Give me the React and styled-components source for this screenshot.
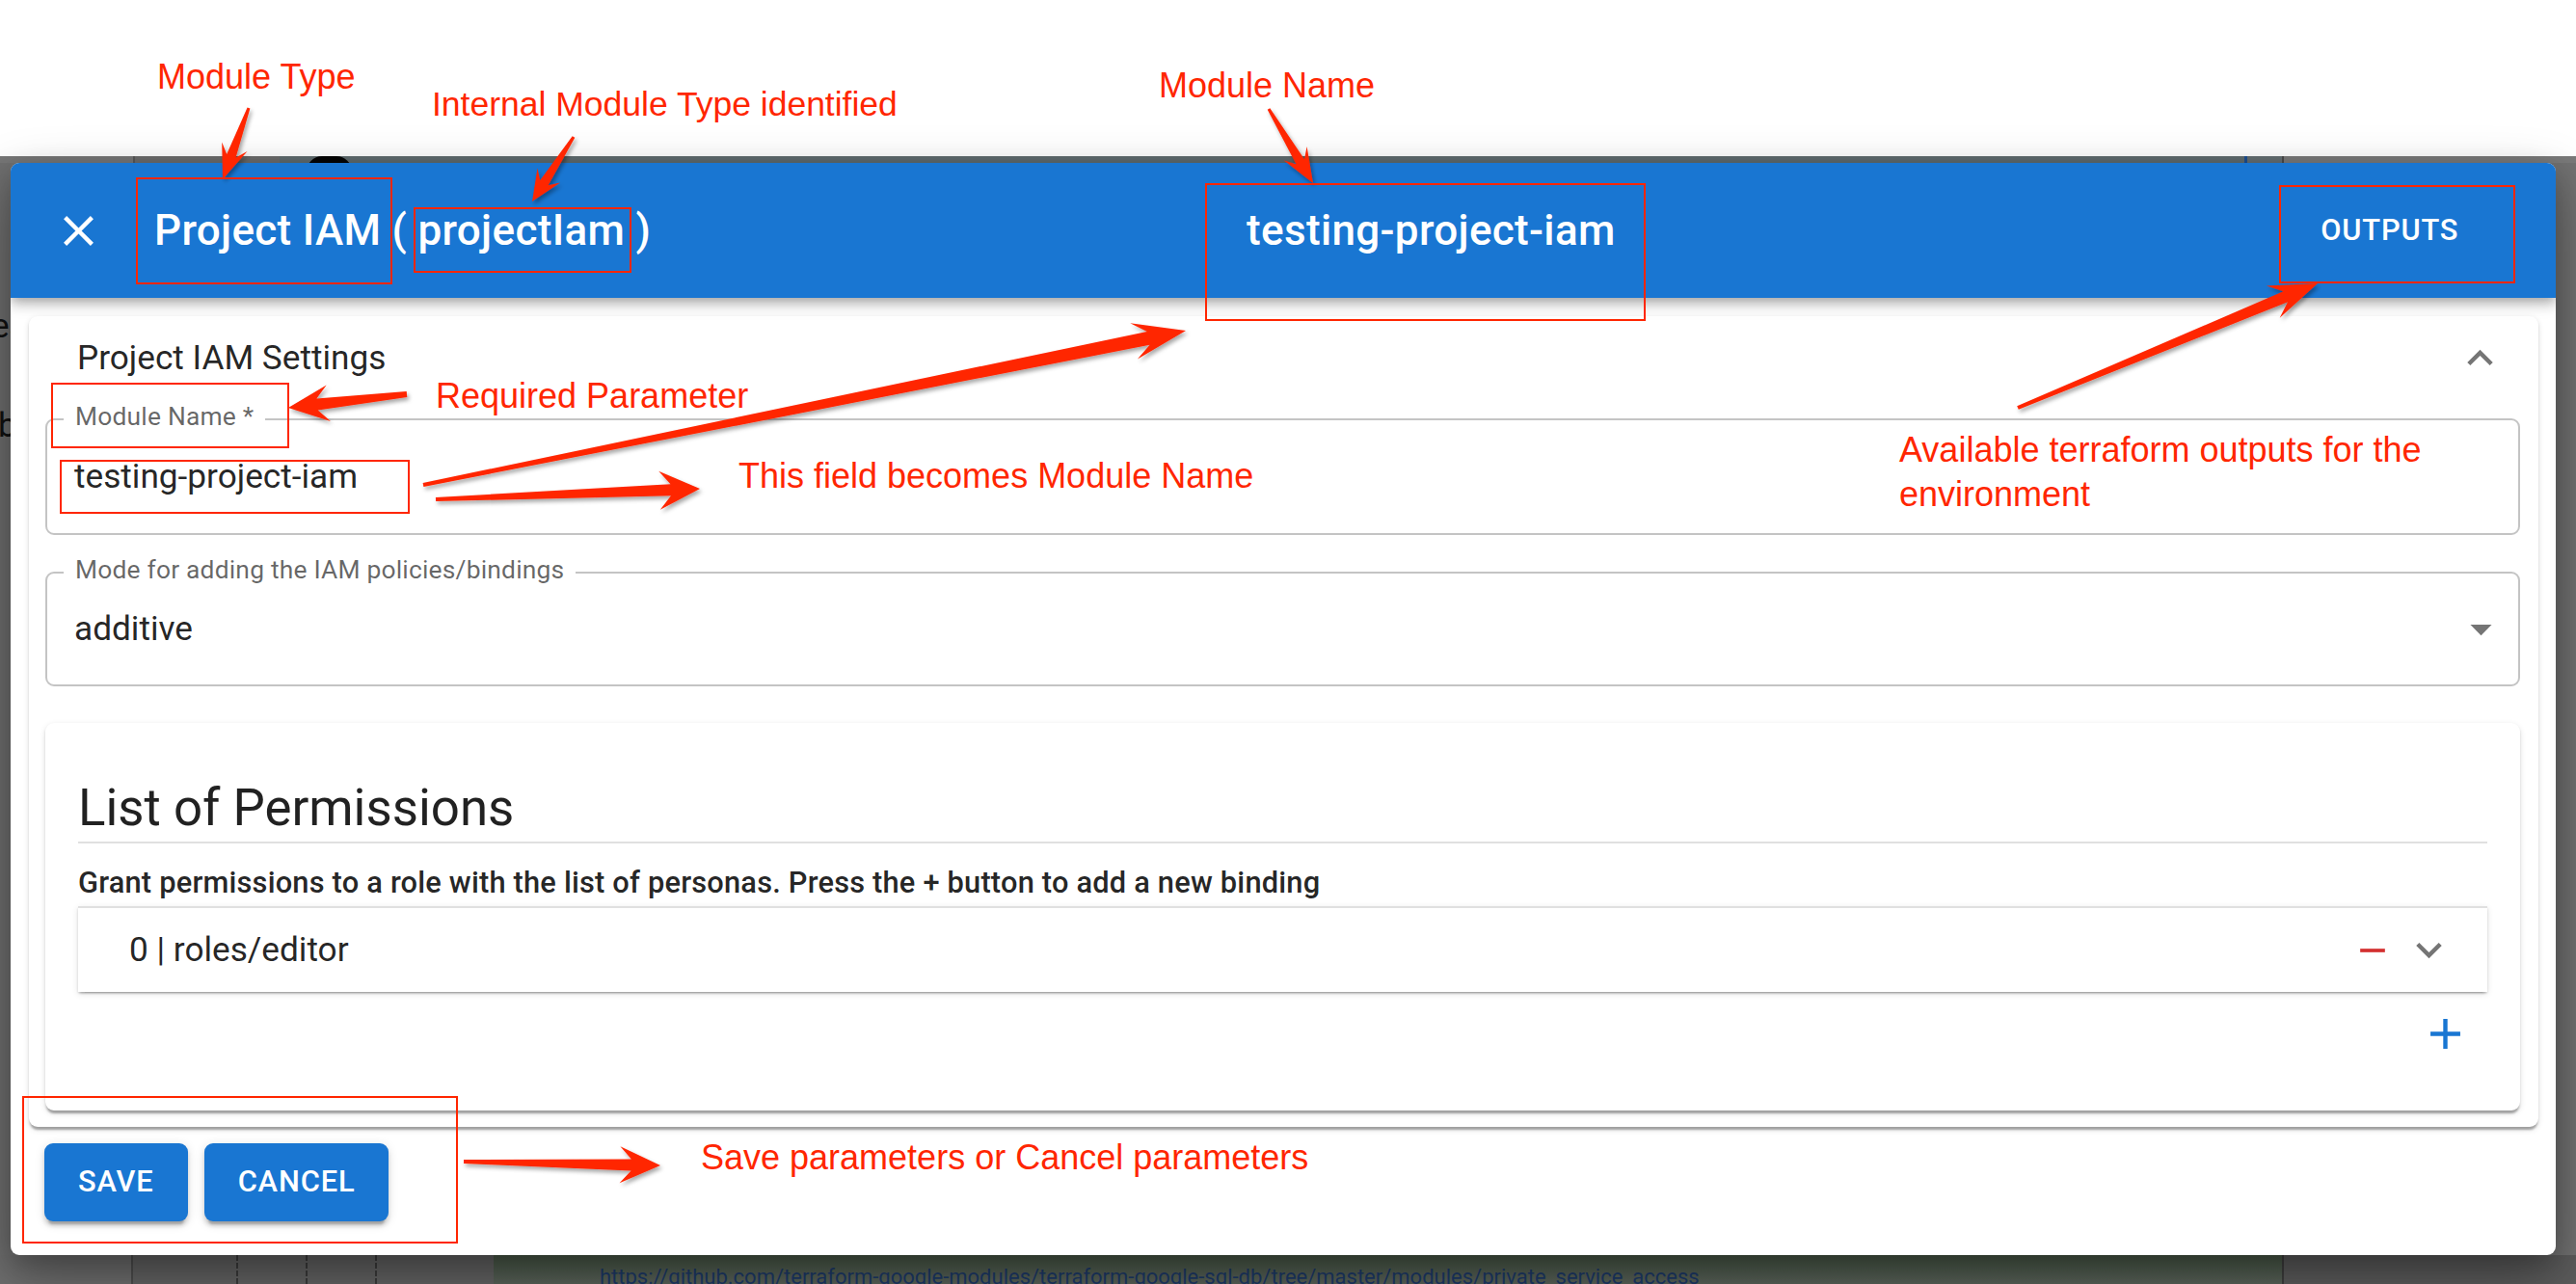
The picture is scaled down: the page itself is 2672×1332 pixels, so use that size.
import React from 'react';
import styled, { createGlobalStyle } from 'styled-components';

const GlobalStyle = createGlobalStyle`
  html, body { margin: 0; padding: 0; }
  body {
    width: 2672px;
    height: 1332px;
    overflow: hidden;
    background: #ffffff;
    font-family: Roboto, "Liberation Sans", sans-serif;
  }
  * { box-sizing: border-box; }
`;

const FONT = 'Roboto, "Liberation Sans", Arial, sans-serif';
const BLUE = '#1976d2';
const TEXT = 'rgba(0, 0, 0, 0.87)';
const RED = '#ff2600';

const elev1 =
  '0 4.4px 2.2px -2.2px rgba(0,0,0,0.2), 0 2.2px 2.2px 0 rgba(0,0,0,0.14), 0 2.2px 6.6px 0 rgba(0,0,0,0.12)';
const elev2 =
  '0 6.6px 2.2px -4.4px rgba(0,0,0,0.2), 0 4.4px 4.4px 0 rgba(0,0,0,0.14), 0 2.2px 11px 0 rgba(0,0,0,0.12)';

/* ---------- page / backdrop ---------- */
const Page = styled.div`
  position: relative;
  width: 2672px;
  height: 1332px;
  display: flex;
  flex-direction: column;
  overflow: hidden;
`;

const TopCanvas = styled.div`
  flex: none;
  height: 162px;
  background: #ffffff;
`;

const Stage = styled.div`
  position: relative;
  flex: 1;
  display: flex;
  flex-direction: column;
  background: #727272;
`;

const Strip = styled.div`
  flex: none;
  height: ${(p) => p.$h}px;
  display: flex;
  overflow: hidden;
`;

const Segment = styled.div`
  flex: ${(p) => (p.$w ? 'none' : '1')};
  width: ${(p) => (p.$w ? `${p.$w}px` : 'auto')};
  background: ${(p) => p.$bg};
  border-left: ${(p) => (p.$line ? `2px ${p.$dash ? 'dashed' : 'solid'} ${p.$line}` : 'none')};
  display: flex;
  overflow: hidden;
`;

const Blob = styled.div`
  width: 47px;
  height: 16px;
  margin-left: 28px;
  background: #050505;
  border-radius: 24px 24px 0 0;
`;

const LinkText = styled.span`
  padding: 10px 0 0 110px;
  font: 400 22px/1.2 ${FONT};
  color: #1d3a68;
  white-space: nowrap;
`;

const Middle = styled.div`
  flex: 1;
  display: flex;
`;

const Gutter = styled.div`
  width: 11px;
  flex: none;
  background: #707070;
  overflow: hidden;
  display: flex;
  flex-direction: column;
  padding-top: 152px;
  gap: 68px;
`;

const GutterText = styled.span`
  display: block;
  font: 400 35px/1 ${FONT};
  color: #111;
  white-space: nowrap;
  text-indent: ${(p) => p.$indent}px;
`;

/* ---------- dialog ---------- */
const Dialog = styled.div`
  position: absolute;
  left: 11px;
  top: 7px;
  width: 2640px;
  height: 1133px;
  background: #ffffff;
  border-radius: 9px;
  overflow: hidden;
  display: flex;
  flex-direction: column;
  box-shadow: 0 24px 60px rgba(0, 0, 0, 0.3), 0 10px 30px rgba(0, 0, 0, 0.22);
`;

const Header = styled.header`
  position: relative;
  z-index: 1;
  flex: none;
  height: 140px;
  display: flex;
  align-items: center;
  padding: 0 83px 0 44px;
  background: ${BLUE};
  color: #ffffff;
  box-shadow: 0 4.4px 9px -2px rgba(0, 0, 0, 0.2), 0 8.8px 11px 0 rgba(0, 0, 0, 0.14),
    0 2.2px 22px 0 rgba(0, 0, 0, 0.12);
`;

const Icon = styled.svg`
  flex: none;
  display: block;
  width: ${(p) => p.$size || 53}px;
  height: ${(p) => p.$size || 53}px;
  fill: ${(p) => p.$color || 'rgba(0,0,0,0.54)'};
`;

const Title = styled.h2`
  margin: 0 0 0 52px;
  font: 500 44px/1.6 ${FONT};
  letter-spacing: 0.33px;
  white-space: nowrap;
`;

const NameSlot = styled.div`
  flex: 1;
  display: flex;
  justify-content: center;
  padding-right: 96px;
  font: 500 44px/1.6 ${FONT};
  letter-spacing: 0.33px;
  white-space: nowrap;
`;

const HeaderButton = styled.button`
  flex: none;
  background: none;
  border: 0;
  padding: 13px 17.6px;
  border-radius: 9px;
  color: #ffffff;
  font: 500 30.8px/1.75 ${FONT};
  letter-spacing: 0.88px;
  text-transform: uppercase;
`;

const Content = styled.div`
  flex: none;
  padding: 19px 18px 0 19px;
`;

const SectionPaper = styled.section`
  background: #ffffff;
  border-radius: 9px;
  box-shadow: ${elev1};
`;

const Summary = styled.div`
  height: 86px;
  display: flex;
  align-items: center;
  justify-content: space-between;
  padding: 0 34px 0 50px;
  font: 400 35.2px/1.5 ${FONT};
  color: ${TEXT};
`;

const Details = styled.div`
  display: flex;
  flex-direction: column;
  gap: 38px;
  padding: 20px 19px 17px 17px;
`;

const Field = styled.div`
  position: relative;
  height: ${(p) => p.$h}px;
  border: 2px solid rgba(0, 0, 0, 0.23);
  border-radius: 9px;
  display: flex;
  align-items: center;
  padding: 0 12px 0 28px;
  font: 400 35.2px/1.2 ${FONT};
  color: ${TEXT};
`;

const FieldLabel = styled.span`
  position: absolute;
  left: 17px;
  top: -17px;
  padding: 0 12px;
  background: #ffffff;
  font: 400 26.4px/1 ${FONT};
  letter-spacing: 0.2px;
  color: rgba(0, 0, 0, 0.6);
  white-space: nowrap;
`;

const FieldValue = styled.span`
  flex: 1;
  white-space: nowrap;
`;

const Card = styled.div`
  background: #ffffff;
  border-radius: 9px;
  box-shadow: ${elev1};
  padding: 53px 34px 53px 34px;
`;

const CardTitle = styled.h3`
  margin: 0;
  font: 400 52.8px/70px ${FONT};
  color: ${TEXT};
`;

const Divider = styled.hr`
  margin: 0;
  border: 0;
  height: 2px;
  background: #e0e0e0;
`;

const CardSubtitle = styled.p`
  margin: 17px 0 0;
  font: 500 30.8px/48px ${FONT};
  letter-spacing: 0.2px;
  color: ${TEXT};
  white-space: nowrap;
`;

const Row = styled.div`
  height: 89px;
  display: flex;
  align-items: center;
  padding: 0 34px 0 53px;
  background: #ffffff;
  border-top: 2px solid #e0e0e0;
  box-shadow: ${elev1};
  font: 400 35.2px/1.5 ${FONT};
  color: ${TEXT};
`;

const RowLabel = styled.span`
  flex: 1;
  white-space: nowrap;
`;

const RowActions = styled.div`
  display: flex;
  align-items: center;
  gap: 10px;
`;

const PlusRow = styled.div`
  display: flex;
  justify-content: flex-end;
  padding: 17px 17px 0 0;
`;

const Actions = styled.div`
  display: flex;
  gap: 17px;
  padding: 17px 35px 0;
`;

const ActionButton = styled.button`
  height: 81px;
  padding: 0 35px;
  border: 0;
  border-radius: 9px;
  background: ${BLUE};
  color: #ffffff;
  font: 500 30.8px/1 ${FONT};
  letter-spacing: 0.88px;
  text-transform: uppercase;
  box-shadow: ${elev2};
`;

/* ---------- annotations ---------- */
const Annotations = styled.div`
  position: absolute;
  inset: 0;
  z-index: 10;
  pointer-events: none;
`;

const ArrowLayer = styled.svg`
  position: absolute;
  left: 0;
  top: 0;
  width: 2672px;
  height: 1332px;
  overflow: visible;
`;

const RedBox = styled.div`
  position: absolute;
  left: ${(p) => p.$x}px;
  top: ${(p) => p.$y}px;
  width: ${(p) => p.$w}px;
  height: ${(p) => p.$h}px;
  border: 2.5px solid ${RED};
`;

const RedNote = styled.div`
  position: absolute;
  left: ${(p) => p.$x}px;
  top: ${(p) => p.$y}px;
  font: 400 ${(p) => p.$size || 36}px / ${(p) => p.$lh || 36}px "Liberation Sans", Arial, sans-serif;
  color: ${RED};
  white-space: nowrap;
`;

function arrowPoints(x1, y1, x2, y2, head = 40, hw = 17, t0 = 2, t1 = 6) {
  const dx = x2 - x1;
  const dy = y2 - y1;
  const len = Math.hypot(dx, dy);
  const ux = dx / len;
  const uy = dy / len;
  const nx = -uy;
  const ny = ux;
  const jx = x2 - ux * head * 0.72;
  const jy = y2 - uy * head * 0.72;
  const bx = x2 - ux * head;
  const by = y2 - uy * head;
  const pts = [
    [x1 + nx * t0, y1 + ny * t0],
    [jx + nx * t1, jy + ny * t1],
    [bx + nx * hw, by + ny * hw],
    [x2, y2],
    [bx - nx * hw, by - ny * hw],
    [jx - nx * t1, jy - ny * t1],
    [x1 - nx * t0, y1 - ny * t0],
  ];
  return pts.map((p) => p.map((v) => v.toFixed(1)).join(',')).join(' ');
}

const ARROWS = [
  [258, 112, 231, 186, 36, 14, 1.5, 5],
  [595, 142, 552, 209, 32, 14, 1.5, 5],
  [1316, 113, 1362, 190, 36, 14, 1.5, 5],
  [422, 409, 299, 423, 42, 19, 3, 6],
  [439, 503, 1230, 343, 55, 19, 2, 7],
  [452, 518, 726, 507, 42, 20, 2, 6],
  [2093, 423, 2404, 294, 50, 18, 2, 6],
  [481, 1205, 685, 1209, 42, 19, 2, 6],
];

const CLOSE = 'M19 6.41 17.59 5 12 10.59 6.41 5 5 6.41 10.59 12 5 17.59 6.41 19 12 13.41 17.59 19 19 17.59 13.41 12z';
const EXPAND_MORE = 'M16.59 8.59 12 13.17 7.41 8.59 6 10l6 6 6-6z';
const EXPAND_LESS = 'M12 8l-6 6 1.41 1.41L12 10.83l4.59 4.58L18 14z';
const DROP = 'M7 10l5 5 5-5z';
const REMOVE = 'M19 13H5v-2h14v2z';
const ADD = 'M19 13h-6v6h-2v-6H5v-2h6V5h2v6h6v2z';

function SvgIcon({ d, size, color }) {
  return (
    <Icon viewBox="0 0 24 24" $size={size} $color={color}>
      <path d={d} />
    </Icon>
  );
}

export default function App() {
  return (
    <>
      <GlobalStyle />
      <Page>
        <TopCanvas />
        <Stage>
          <Strip $h={7}>
            <Segment $w={138} $bg="#777777" />
            <Segment $w={152} $bg="#6c6c6c" $line="#585858" />
            <Segment $w={2038} $bg="#5f6b6f">
              <Blob />
            </Segment>
            <Segment $w={3} $bg="#1d4f91" />
            <Segment $w={36} $bg="#646e72" />
            <Segment $bg="#7a7a7a" $line="#4a4a4a" />
          </Strip>
          <Middle>
            <Gutter>
              <GutterText $indent={-9}>es</GutterText>
              <GutterText $indent={-2}>b</GutterText>
            </Gutter>
          </Middle>
          <Strip $h={30}>
            <Segment $w={136} $bg="#6f6f6f" />
            <Segment $w={109} $bg="#646464" $line="#4e4e4e" />
            <Segment $w={72} $bg="#646464" $line="#3c3c3c" $dash />
            <Segment $w={72} $bg="#646464" $line="#3c3c3c" $dash />
            <Segment $w={123} $bg="#646464" $line="#3c3c3c" $dash />
            <Segment $w={1855} $bg="linear-gradient(180deg, #4a5a48 0%, #5a635a 100%)">
              <LinkText>
                https://github.com/terraform-google-modules/terraform-google-sql-db/tree/master/modules/private_service_access
              </LinkText>
            </Segment>
            <Segment $bg="#5c5c5c" $line="#3e3e3e" />
          </Strip>

          <Dialog>
            <Header>
              <SvgIcon d={CLOSE} color="#ffffff" />
              <Title>Project IAM ( projectIam )</Title>
              <NameSlot>testing-project-iam</NameSlot>
              <HeaderButton>Outputs</HeaderButton>
            </Header>
            <Content>
              <SectionPaper>
                <Summary>
                  <span>Project IAM Settings</span>
                  <SvgIcon d={EXPAND_LESS} />
                </Summary>
                <Details>
                  <Field $h={121}>
                    <FieldLabel>Module Name *</FieldLabel>
                    <FieldValue>testing-project-iam</FieldValue>
                  </Field>
                  <Field $h={119}>
                    <FieldLabel>Mode for adding the IAM policies/bindings</FieldLabel>
                    <FieldValue>additive</FieldValue>
                    <SvgIcon d={DROP} />
                  </Field>
                  <Card>
                    <CardTitle>List of Permissions</CardTitle>
                    <Divider />
                    <CardSubtitle>
                      Grant permissions to a role with the list of personas. Press the + button to add a new binding
                    </CardSubtitle>
                    <Row>
                      <RowLabel>0 | roles/editor</RowLabel>
                      <RowActions>
                        <SvgIcon d={REMOVE} size={44} color="#d32f2f" />
                        <SvgIcon d={EXPAND_MORE} />
                      </RowActions>
                    </Row>
                    <PlusRow>
                      <SvgIcon d={ADD} color={BLUE} />
                    </PlusRow>
                  </Card>
                </Details>
              </SectionPaper>
            </Content>
            <Actions>
              <ActionButton>Save</ActionButton>
              <ActionButton>Cancel</ActionButton>
            </Actions>
          </Dialog>
        </Stage>

        <Annotations>
          <ArrowLayer viewBox="0 0 2672 1332">
            <defs>
              <filter id="arrowShadow" x="-10%" y="-10%" width="130%" height="130%">
                <feDropShadow dx="2" dy="3" stdDeviation="2" floodColor="#000" floodOpacity="0.35" />
              </filter>
            </defs>
            {ARROWS.map((a, i) => (
              <polygon key={i} points={arrowPoints(...a)} fill={RED} filter="url(#arrowShadow)" />
            ))}
          </ArrowLayer>

          <RedBox $x={141} $y={184} $w={266} $h={111} />
          <RedBox $x={429} $y={215} $w={226} $h={68} />
          <RedBox $x={1250} $y={190} $w={457} $h={143} />
          <RedBox $x={2364} $y={192} $w={245} $h={102} />
          <RedBox $x={53} $y={397} $w={247} $h={68} />
          <RedBox $x={62} $y={477} $w={363} $h={56} />
          <RedBox $x={23} $y={1137} $w={452} $h={153} />

          <RedNote $x={163} $y={62}>Module Type</RedNote>
          <RedNote $x={448} $y={90} $size={35.5}>Internal Module Type identified</RedNote>
          <RedNote $x={1202} $y={71}>Module Name</RedNote>
          <RedNote $x={452} $y={393}>Required Parameter</RedNote>
          <RedNote $x={766} $y={476}>This field becomes Module Name</RedNote>
          <RedNote $x={1970} $y={444} $lh={46}>
            Available terraform outputs for the
            <br />
            environment
          </RedNote>
          <RedNote $x={727} $y={1183}>Save parameters or Cancel parameters</RedNote>
        </Annotations>
      </Page>
    </>
  );
}
